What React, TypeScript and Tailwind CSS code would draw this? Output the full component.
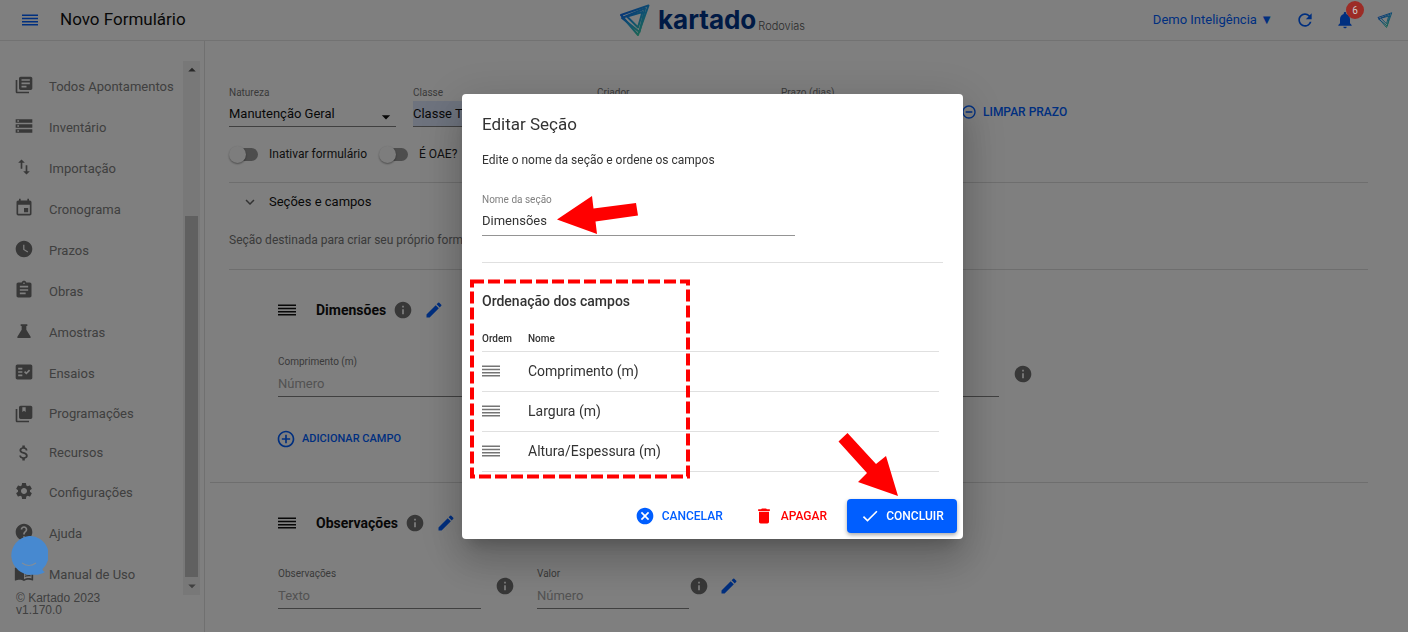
import { useState } from "react";
import type { ReactNode } from "react";
import type { IconType } from "react-icons";
import {
  MdAddCircleOutline,
  MdArrowDropDown,
  MdAssignment,
  MdCancel,
  MdCheck,
  MdDelete,
  MdEdit,
  MdEvent,
  MdExpandMore,
  MdFactCheck,
  MdHelp,
  MdInfo,
  MdLibraryBooks,
  MdMenuBook,
  MdNotifications,
  MdRefresh,
  MdRemoveCircleOutline,
  MdSettings,
  MdStorage,
  MdSwapVert,
  MdWatchLater,
  MdAttachMoney,
} from "react-icons/md";

interface MenuItem {
  label: string;
  icon: IconType;
  compact?: boolean;
}

function FlaskIcon({ size = 20, className }: { size?: number | string; className?: string }) {
  return (
    <svg viewBox="0 0 24 24" width={size} height={size} fill="currentColor" className={className}>
      <path d="M8 4h8v2h-1.200v4.500l5 8c.6 1 .1 2-1 2H5.200c-1.100 0-1.600-1-1-2l5-8V6H8z" />
    </svg>
  );
}

function CollectionsBookIcon({ size = 20, className }: { size?: number | string; className?: string }) {
  return (
    <svg viewBox="0 0 24 24" width={size} height={size} fill="currentColor" className={className}>
      <path d="M4 6H2v14c0 1.100.900 2 2 2h14v-2H4V6z" />
      <path
        fillRule="evenodd"
        d="M20 2H8c-1.100 0-2 .900-2 2v12c0 1.100.900 2 2 2h12c1.100 0 2-.900 2-2V4c0-1.100-.900-2-2-2zM14 9.500l-2-1.500L10 9.500V4h4z"
      />
    </svg>
  );
}

// Four thin bars, used for the menu button and the drag handles
function BarsIcon({ className }: { className?: string }) {
  return (
    <svg viewBox="0 0 18 12" preserveAspectRatio="none" fill="currentColor" className={className}>
      <path d="M0 .500h18v1.500H0zM0 3.700h18v1.500H0zM0 6.900h18v1.500H0zM0 10.100h18v1.500H0z" />
    </svg>
  );
}

const menuItems: MenuItem[] = [
  { label: "Todos Apontamentos", icon: MdLibraryBooks },
  { label: "Inventário", icon: MdStorage },
  { label: "Importação", icon: MdSwapVert },
  { label: "Cronograma", icon: MdEvent },
  { label: "Prazos", icon: MdWatchLater },
  { label: "Obras", icon: MdAssignment },
  { label: "Amostras", icon: FlaskIcon as IconType },
  { label: "Ensaios", icon: MdFactCheck },
  { label: "Programações", icon: CollectionsBookIcon as IconType, compact: true },
  { label: "Recursos", icon: MdAttachMoney, compact: true },
  { label: "Configurações", icon: MdSettings },
  { label: "Ajuda", icon: MdHelp },
  { label: "Manual de Uso", icon: MdMenuBook },
];

const sectionFields = ["Comprimento (m)", "Largura (m)", "Altura/Espessura (m)"];

function KartadoMark({ className }: { className?: string }) {
  return (
    <svg viewBox="0 0 30 32" fill="none" className={className}>
      <defs>
        <linearGradient id="mark" x1="4" y1="4" x2="24" y2="30" gradientUnits="userSpaceOnUse">
          <stop offset="0" stopColor="#0a5cf0" />
          <stop offset="0.5" stopColor="#1fa5e0" />
          <stop offset="1" stopColor="#3cd0a0" />
        </linearGradient>
      </defs>
      <g stroke="url(#mark)" strokeWidth="2" strokeLinejoin="round">
        <path d="M1 11 28.500 1.500 18 31z" />
        <path d="M2 14 25 4.500 19.500 28z" />
        <path d="M7 12.500 22.500 8 18 23.500z" />
      </g>
    </svg>
  );
}

function Header() {
  return (
    <header className="grid h-[41px] grid-cols-[1fr_auto_1fr] items-center border-b border-[#e4e4e4] bg-white pl-[22px] pr-[15px]">
      <div className="flex items-center gap-[22px]">
        <button type="button" aria-label="Abrir menu" className="text-[#005eff]">
          <BarsIcon className="h-3 w-4" />
        </button>
        <h1 className="text-[17px] text-[#111]">Novo Formulário</h1>
      </div>
      <div className="ml-2.5 flex items-center">
        <KartadoMark className="h-8 w-[30px]" />
        <span className="ml-2 font-['Inter'] text-[26px] font-bold leading-8 text-[#00358a]">kartado</span>
        <span className="ml-0.5 mt-3 font-['Inter'] text-[11px] font-light text-[#555]">Rodovias</span>
      </div>
      <div className="flex items-center justify-end text-[#005eff]">
        <button type="button" className="text-[13px]">
          Demo Inteligência ▼
        </button>
        <button type="button" aria-label="Atualizar" className="ml-[22px]">
          <MdRefresh size={20} />
        </button>
        <button type="button" aria-label="Notificações" className="relative ml-5">
          <MdNotifications size={20} />
          <span className="absolute -top-[9px] left-[11px] z-50 grid size-[18px] place-items-center rounded-full bg-[#9c2c26] text-[10px] text-[#ccc]">
            6
          </span>
        </button>
        <a href="#conta" aria-label="Conta" className="ml-[22px]">
          <KartadoMark className="size-4" />
        </a>
      </div>
    </header>
  );
}

function Sidebar() {
  return (
    <aside className="flex w-[205px] shrink-0 flex-col border-r border-[#e0e0e0] pt-5">
      <div className="flex">
        <nav className="flex-1 pt-[5px]">
          {menuItems.map(({ label, icon: Icon, compact }) => (
            <a
              key={label}
              href="#menu"
              className={`flex items-center gap-[15px] whitespace-nowrap pl-3.5 text-[13px] text-[#808080] ${
                compact ? "h-[39px]" : "h-[41px]"
              }`}
            >
              <Icon size={20} className={`shrink-0 text-[#707070] ${compact ? "" : "mb-1"}`} />
              {label}
            </a>
          ))}
        </nav>
        <div className="mr-1 flex w-[17px] flex-col items-center bg-[#f1f1f1]">
          <MdArrowDropDown size={18} className="rotate-180 text-[#505050]" />
          <div className="mt-[137px] w-[13px] flex-1 bg-[#c1c1c1]" />
          <MdArrowDropDown size={18} className="text-[#808080]" />
        </div>
      </div>
      <p className="-mt-[3px] pl-4 font-['Liberation_Sans'] text-[12px] leading-3 text-[#808080]">
        © Kartado 2023
        <br />
        v1.170.0
      </p>
    </aside>
  );
}

function SelectField({ label, value, highlighted }: { label: string; value: string; highlighted?: boolean }) {
  return (
    <label className="relative block w-[167px] text-[10px] leading-4 text-[#757575]">
      {label}
      <select
        className={`block h-[26px] w-full appearance-none border-b border-[#808080] text-[13px] text-[#111] outline-none ${
          highlighted ? "bg-[#dce7fd]" : ""
        }`}
      >
        <option>{value}</option>
      </select>
      <MdArrowDropDown size={20} className="pointer-events-none absolute bottom-0 right-0 text-[#111]" />
    </label>
  );
}

function Toggle({ label }: { label: string }) {
  return (
    <label className="flex items-center text-[12px] text-[#222]">
      <input type="checkbox" className="peer sr-only" />
      <span className="mr-[11px] flex h-[18px] w-[29px] items-center">
        <span className="relative size-[17px] shrink-0 rounded-full bg-[#fafafa] shadow-[0_1px_2px_rgba(0,0,0,0.4)]" />
        <span className="-ml-2 h-[13px] flex-1 rounded-r-full bg-[#9a9a9a]" />
      </span>
      {label}
    </label>
  );
}

interface TextFieldProps {
  label: string;
  placeholder: string;
  narrow?: boolean;
}

function TextField({ label, placeholder, narrow }: TextFieldProps) {
  return (
    <label className={`block text-[10px] leading-4 text-[#757575] ${narrow ? "w-[152px]" : "w-[203px]"}`}>
      {label}
      <input
        type="text"
        placeholder={placeholder}
        className="block h-[27px] w-full border-b border-[#808080] text-[13px] outline-none placeholder:text-[#a5a5a5]"
      />
    </label>
  );
}

function SectionTitle({ children }: { children: ReactNode }) {
  return (
    <div className="flex h-6 items-center">
      <BarsIcon className="h-3 w-[18px] text-[#111]" />
      <h3 className="ml-5 text-[14px] font-bold text-[#111]">{children}</h3>
      <MdInfo size={20} className="ml-[7px] text-[#707070]" />
      <button type="button" aria-label="Editar seção" className="ml-[11px] text-[#005eff]">
        <MdEdit size={20} />
      </button>
    </div>
  );
}

function FormPage() {
  return (
    <main className="min-w-0 flex-1 overflow-hidden pl-6 pr-10 pt-11">
      <div className="flex items-start gap-[17px] whitespace-nowrap">
        <SelectField label="Natureza" value="Manutenção Geral" />
        <SelectField label="Classe" value="Classe Teste" highlighted />
        <SelectField label="Criador" value="" />
        <SelectField label="Prazo (dias)" value="" />
        <button type="button" className="mt-[18px] flex items-center gap-1.5 text-[12px] font-medium text-[#005eff]">
          <MdRemoveCircleOutline size={16} className="-ml-1" />
          LIMPAR PRAZO
        </button>
      </div>
      <div className="mt-[18px] flex gap-3 border-b border-[#dcdcdc] pb-[19px]">
        <Toggle label="Inativar formulário" />
        <Toggle label="É OAE?" />
      </div>
      <div className="flex h-[38px] items-center pl-3">
        <MdExpandMore size={18} className="text-[#666]" />
        <h2 className="ml-2.5 text-[13px] text-[#111]">Seções e campos</h2>
      </div>
      <p className="h-[49px] border-b border-[#dcdcdc] pt-[11px] text-[12px] leading-4 text-[#757575]">
        Seção destinada para criar seu próprio formulário
      </p>
      <section className="-ml-[19px] border-b border-[#dcdcdc] pb-[33px] pl-[68px] pt-7">
        <SectionTitle>Dimensões</SectionTitle>
        <div className="mt-8 flex items-center gap-[22px]">
          <div className="flex items-center gap-3.5">
            <TextField label="Comprimento (m)" placeholder="Número" />
            <MdInfo size={20} className="mb-1 text-[#707070]" />
          </div>
          <div className="flex items-center gap-3.5">
            <input
              type="text"
              aria-label="Largura (m)"
              className="mt-4 h-[27px] w-[203px] border-b border-[#808080] text-[13px] outline-none"
            />
            <MdInfo size={20} className="mb-1 text-[#707070]" />
          </div>
          <div className="flex items-center gap-3.5">
            <TextField label="Altura/Espessura (m)" placeholder="Número" />
            <MdInfo size={20} className="mb-1 text-[#707070]" />
          </div>
        </div>
        <button type="button" className="mt-8 flex items-center gap-1.5 text-[11px] font-medium text-[#005eff]">
          <MdAddCircleOutline size={20} className="-ml-0.5" />
          ADICIONAR CAMPO
        </button>
      </section>
      <section className="pl-[49px] pt-7">
        <SectionTitle>Observações</SectionTitle>
        <div className="mt-[31px] flex items-center">
          <TextField label="Observações" placeholder="Texto" />
          <MdInfo size={20} className="mb-1 ml-3.5 mr-[22px] text-[#707070]" />
          <TextField label="Valor" placeholder="Número" narrow />
          <MdInfo size={20} className="mb-1 text-[#707070]" />
          <button type="button" aria-label="Editar campo" className="mb-1 ml-2.5 text-[#005eff]">
            <MdEdit size={20} />
          </button>
        </div>
      </section>
    </main>
  );
}

// Red marks that guide the reader through the dialog
function Annotations() {
  return (
    <svg className="pointer-events-none absolute inset-0 size-full overflow-visible" fill="#ff0000">
      <path d="M95 125.500 130 102 131.500 114.500 174 109 176 121.500 133.500 127.500 135 140z" />
      <path d="M436 402 424 362 414 370 385.500 339 376.500 347.500 405 379 396 388z" />
      <rect x="10" y="187.500" width="216" height="195" fill="none" stroke="#ff0000" strokeWidth="4" strokeDasharray="12 4" />
    </svg>
  );
}

function EditSectionDialog() {
  const [name, setName] = useState("Dimensões");

  return (
    <div className="fixed inset-0 z-40 flex items-center justify-center bg-black/50 pl-[17px] pt-px">
      <div
        role="dialog"
        aria-labelledby="dialog-title"
        className="relative w-[501px] rounded bg-white px-5 pb-1.5 pt-4 text-[#333] shadow-[0_11px_15px_-7px_rgba(0,0,0,0.2),0_24px_38px_3px_rgba(0,0,0,0.14),0_9px_46px_8px_rgba(0,0,0,0.12)]"
      >
        <h2 id="dialog-title" className="text-[17px] leading-7">
          Editar Seção
        </h2>
        <p className="mt-3.5 text-[12px] leading-4">Edite o nome da seção e ordene os campos</p>
        <label className="mt-6 block w-[313px] text-[10px] leading-4 text-[#808080]">
          Nome da seção
          <input
            type="text"
            value={name}
            onChange={(e) => setName(e.target.value)}
            className="block h-7 w-full border-b border-[#949494] pb-0.5 text-[13px] text-[#333] outline-none"
          />
        </label>
        <hr className="mt-[26px] border-[#e0e0e0]" />
        <h3 className="mt-[30px] text-[14px] font-medium leading-4">Ordenação dos campos</h3>
        <table className="mt-4 w-[457px] text-left">
          <thead>
            <tr className="h-[26px] border-b border-[#e0e0e0] text-[10px]">
              <th className="w-[46px] font-medium">Ordem</th>
              <th className="font-medium">Nome</th>
            </tr>
          </thead>
          <tbody>
            {sectionFields.map((field) => (
              <tr key={field} className="h-10 border-b border-[#e0e0e0] text-[14px]">
                <td>
                  <BarsIcon className="h-3 w-[18px] text-[#757575]" />
                </td>
                <td>{field}</td>
              </tr>
            ))}
          </tbody>
        </table>
        <div className="-mr-3.5 mt-[27px] flex items-center justify-end text-[12px] font-medium">
          <button type="button" className="flex items-center gap-[7px] text-[#005eff]">
            <MdCancel size={20} />
            CANCELAR
          </button>
          <button type="button" className="ml-[31px] mr-5 flex items-center gap-[7px] text-[#ff0000]">
            <MdDelete size={20} />
            APAGAR
          </button>
          <button
            type="button"
            className="flex h-[34px] w-[110px] items-center justify-center gap-1.5 rounded bg-[#005eff] text-white shadow-[0_2px_4px_rgba(0,0,0,0.35)]"
          >
            <MdCheck size={20} />
            CONCLUIR
          </button>
        </div>
        <Annotations />
      </div>
    </div>
  );
}

function ChatBubble() {
  return (
    <button type="button" aria-label="Abrir chat" className="fixed bottom-14 left-2.5 z-50">
      <svg viewBox="0 0 38 40" className="h-10 w-[38px]" fill="none">
        <path d="M19 0a19 19 0 1 0 3.500 38.700c5 .500 9-.500 12.500-2.700-1.500-.500-2.500-1.700-2.500-3A19 19 0 0 0 19 0z" fill="#4789d0" />
        <path d="M12 27c4.500 3.200 9.500 3.200 14 0" stroke="#7f8d9c" strokeWidth="1.200" />
      </svg>
    </button>
  );
}

export default function App() {
  return (
    <div className="flex h-screen flex-col overflow-hidden bg-white font-['Roboto',sans-serif]">
      <Header />
      <div className="flex min-h-0 flex-1">
        <Sidebar />
        <FormPage />
      </div>
      <EditSectionDialog />
      <ChatBubble />
    </div>
  );
}
